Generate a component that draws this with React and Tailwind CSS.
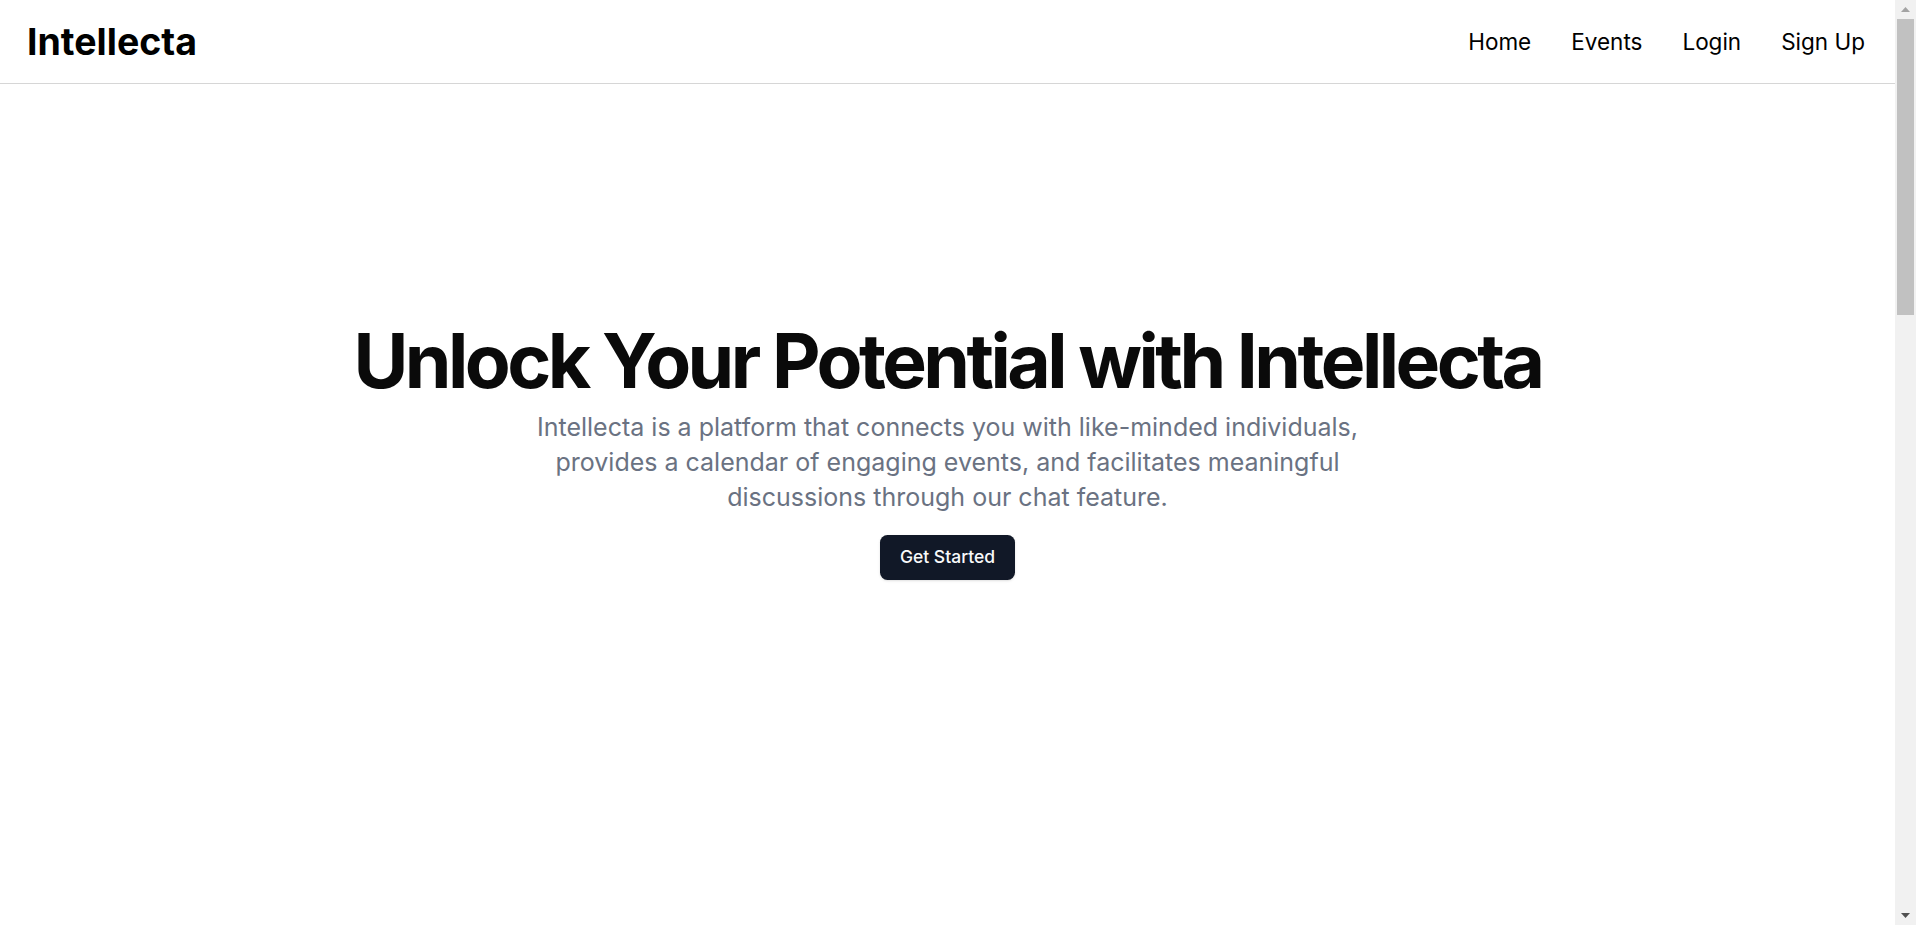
import React from 'react';

const navLinks = ['Home', 'Events', 'Login', 'Sign Up'];

const features = [
    { title: 'Connect', text: 'Meet like-minded individuals who share your interests and curiosity.' },
    { title: 'Events', text: 'Browse a calendar of engaging events and never miss a session.' },
    { title: 'Chat', text: 'Join meaningful discussions with our built-in chat feature.' },
];

// Browser-style vertical scrollbar, as seen in the screenshot
const Scrollbar = () => (
    <aside className="w-[21px] shrink-0 h-full bg-[#f1f1f1] flex flex-col">
        <div className="h-[19px] flex items-center justify-center">
            <svg width="9" height="5" viewBox="0 0 9 5"><polygon points="4.5,0 9,5 0,5" fill="#a3a3a3" /></svg>
        </div>
        <div className="h-[296px] mx-[2px] bg-[#c1c1c1]"></div>
        <div className="flex-1"></div>
        <div className="h-[19px] flex items-center justify-center">
            <svg width="9" height="5" viewBox="0 0 9 5"><polygon points="0,0 9,0 4.5,5" fill="#505050" /></svg>
        </div>
    </aside>
);

const App = () => {
    return (
        <div className="h-screen w-full flex overflow-hidden bg-white font-['Inter',sans-serif] text-[#0a0a0a]">
            <div className="flex-1 min-w-0 h-full overflow-hidden flex flex-col">
                {/* Header */}
                <header className="h-[84px] shrink-0 pl-[27px] pr-[30px] flex items-center border-b border-[#d6d6d6]">
                    <a href="#" className="text-[37.5px] leading-[45px] font-bold text-black">Intellecta</a>
                    <nav className="ml-auto flex items-center gap-10">
                        {navLinks.map((link) => (
                            <a key={link} href="#" className="text-[22.5px] leading-[35px] text-black">
                                {link}
                            </a>
                        ))}
                    </nav>
                </header>

                <main className="shrink-0">
                    {/* Hero */}
                    <section className="w-full pt-[239px] pb-[240px]">
                        <div className="px-[30px] flex flex-col items-center text-center space-y-5">
                            <div className="space-y-3">
                                <h1 className="text-[75px] leading-none font-bold tracking-[-0.047em]">
                                    Unlock Your Potential with Intellecta
                                </h1>
                                <p className="mx-auto max-w-[875px] text-[25px] leading-[35px] text-gray-500">
                                    Intellecta is a platform that connects you with like-minded individuals, provides a calendar of engaging events, and facilitates meaningful discussions through our chat feature.
                                </p>
                            </div>
                            <a
                                href="#"
                                className="h-[45px] px-5 inline-flex items-center justify-center rounded-[7.5px] bg-[#111827] text-[17.5px] font-medium text-gray-50 shadow"
                            >
                                Get Started
                            </a>
                        </div>
                    </section>

                    {/* Features (below the fold) */}
                    <section className="w-full py-[240px]">
                        <div className="px-[30px] flex flex-col items-center text-center gap-10">
                            <h2 className="text-[60px] font-bold tracking-tighter">Why Intellecta?</h2>
                            <div className="grid grid-cols-3 gap-10 max-w-[1400px] w-full">
                                {features.map((f) => (
                                    <div key={f.title} className="flex flex-col gap-3 p-8 border border-gray-200 rounded-xl">
                                        <h3 className="text-[30px] font-bold">{f.title}</h3>
                                        <p className="text-[22.5px] text-gray-500">{f.text}</p>
                                    </div>
                                ))}
                            </div>
                        </div>
                    </section>
                </main>
            </div>
            <Scrollbar />
        </div>
    );
};

export default App;
